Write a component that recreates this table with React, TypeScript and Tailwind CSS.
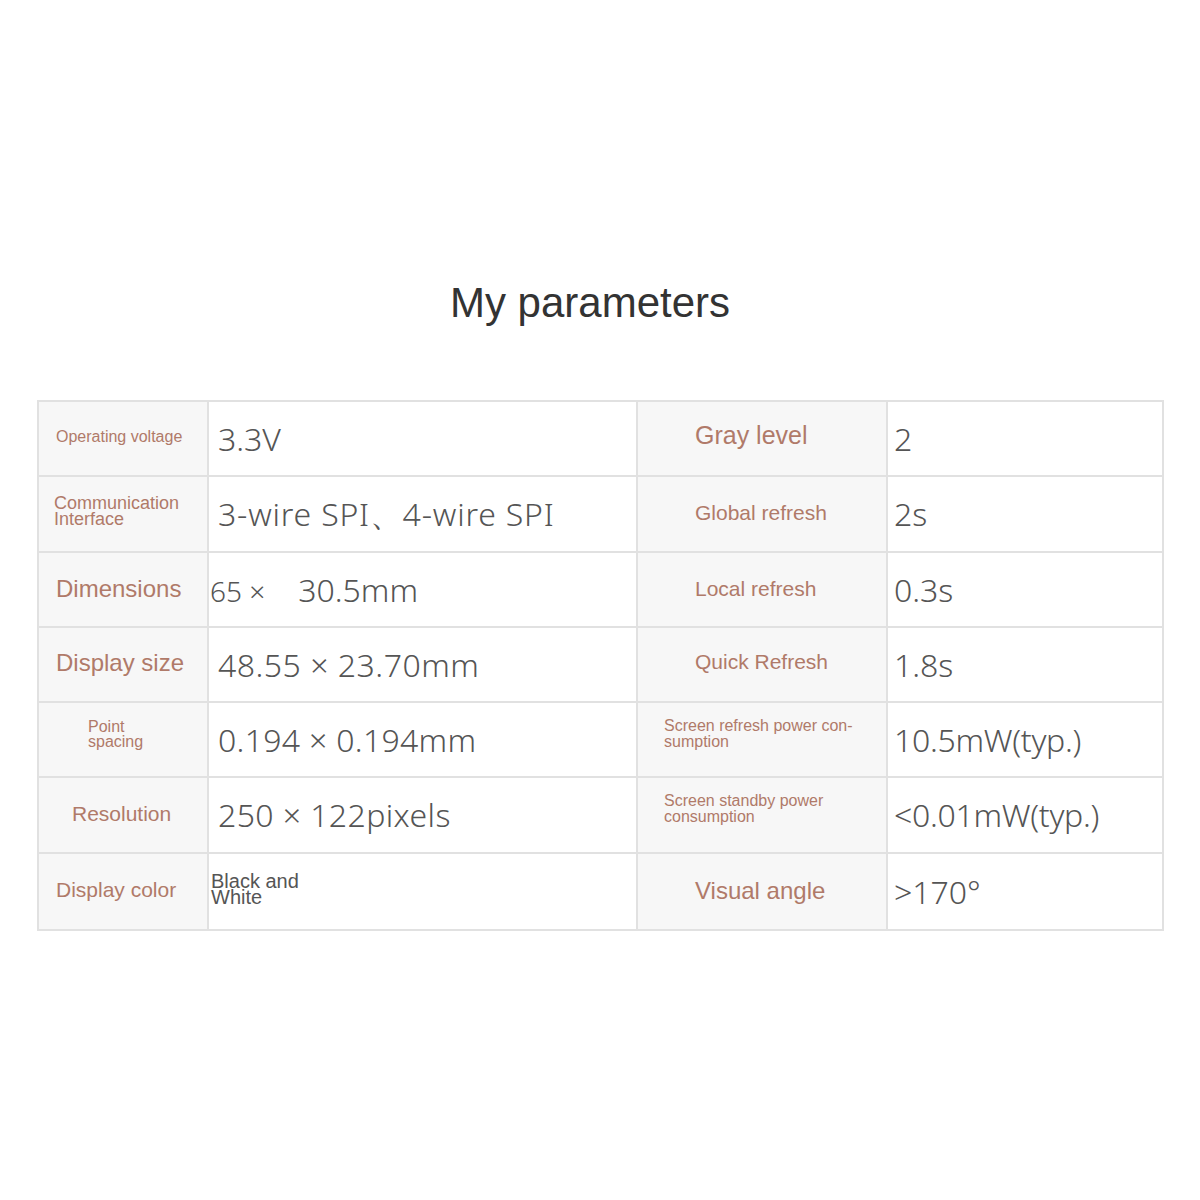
import React from "react";

type Cell = {
  text: React.ReactNode;
  className: string;
};

const label = "text-[#b07a69]";
const value = "text-[#555555]";

const rows: { left: Cell; leftVal: Cell; right: Cell; rightVal: Cell }[] = [
  {
    left: { text: "Operating voltage", className: "text-[16px] pl-[17px] -mt-[4px]" },
    leftVal: { text: "3.3V", className: "text-[32px] pl-[9px]" },
    right: { text: "Gray level", className: "text-[25px] pl-[57px] -mt-[6px]" },
    rightVal: { text: "2", className: "text-[32px] pl-[6px]" },
  },
  {
    left: {
      text: (
        <>
          Communication
          <br />
          Interface
        </>
      ),
      className: "text-[18px] leading-[16px] pl-[15px] -mt-[6px]",
    },
    leftVal: { text: "3-wire SPI、4-wire SPI", className: "text-[32px] pl-[9px] tracking-[0.8px]" },
    right: { text: "Global refresh", className: "text-[21px] pl-[57px] -mt-[2px]" },
    rightVal: { text: "2s", className: "text-[32px] pl-[6px]" },
  },
  {
    left: { text: "Dimensions", className: "text-[24px] pl-[17px] -mt-[2px]" },
    leftVal: {
      text: (
        <>
          <span className="text-[28px]">65 ×</span>
          <span className="ml-[33px]">30.5mm</span>
        </>
      ),
      className: "text-[32px] pl-[1px]",
    },
    right: { text: "Local refresh", className: "text-[21px] pl-[57px] -mt-[2px]" },
    rightVal: { text: "0.3s", className: "text-[32px] pl-[6px]" },
  },
  {
    left: { text: "Display size", className: "text-[24px] pl-[17px] -mt-[4px]" },
    leftVal: { text: "48.55 × 23.70mm", className: "text-[32px] pl-[9px] tracking-[0.5px]" },
    right: { text: "Quick Refresh", className: "text-[21px] pl-[57px] -mt-[6px]" },
    rightVal: { text: "1.8s", className: "text-[32px] pl-[6px]" },
  },
  {
    left: {
      text: (
        <>
          Point
          <br />
          spacing
        </>
      ),
      className: "text-[16px] leading-[15px] pl-[49px] -mt-[12px]",
    },
    leftVal: { text: "0.194 × 0.194mm", className: "text-[32px] pl-[9px] tracking-[0.3px]" },
    right: {
      text: (
        <>
          Screen refresh power con-
          <br />
          sumption
        </>
      ),
      className: "text-[16px] leading-[16px] pl-[26px] -mt-[12px]",
    },
    rightVal: { text: "10.5mW(typ.)", className: "text-[32px] pl-[6px] tracking-[-0.3px]" },
  },
  {
    left: { text: "Resolution", className: "text-[21px] pl-[33px] -mt-[2px]" },
    leftVal: { text: "250 × 122pixels", className: "text-[32px] pl-[9px] tracking-[0.4px]" },
    right: {
      text: (
        <>
          Screen standby power
          <br />
          consumption
        </>
      ),
      className: "text-[16px] leading-[16px] pl-[26px] -mt-[12px]",
    },
    rightVal: { text: "<0.01mW(typ.)", className: "text-[32px] pl-[6px] tracking-[-0.3px]" },
  },
  {
    left: { text: "Display color", className: "text-[21px] pl-[17px] -mt-[4px]" },
    leftVal: {
      text: (
        <>
          Black and
          <br />
          White
        </>
      ),
      className: "text-[20px] leading-[16px] pl-[2px] -mt-[6px] font-['Liberation_Sans',Arial,sans-serif]",
    },
    right: { text: "Visual angle", className: "text-[24px] pl-[57px] -mt-[2px]" },
    rightVal: { text: ">170°", className: "text-[32px] pl-[6px]" },
  },
];

const heights = ["h-[75px]", "h-[76px]", "h-[75px]", "h-[75px]", "h-[75px]", "h-[76px]", "h-[75px]"];

export default function App() {
  return (
    <div className="min-h-[1200px] w-[1200px] bg-white pt-[279px] font-['Liberation_Sans',Arial,sans-serif]">
      <h1 className="text-center text-[42px] leading-[48px] text-[#333333] pr-[20px]">My parameters</h1>

      <div className="mt-[73px] ml-[37px] w-[1127px] border-2 border-[#e1e1e1]">
        {rows.map((row, i) => (
          <div
            key={i}
            className={`grid grid-cols-[170px_429px_250px_274px] ${heights[i]} ${
              i < rows.length - 1 ? "border-b-2 border-[#e1e1e1]" : ""
            }`}
          >
            <div className={`flex items-center bg-[#f7f7f7] border-r-2 border-[#e1e1e1] ${label}`}>
              <div className={row.left.className}>{row.left.text}</div>
            </div>
            <div className={`flex items-center bg-white border-r-2 border-[#e1e1e1] ${value} font-['Noto_Sans',sans-serif] font-light`}>
              <div className={row.leftVal.className}>{row.leftVal.text}</div>
            </div>
            <div className={`flex items-center bg-[#f7f7f7] border-r-2 border-[#e1e1e1] ${label}`}>
              <div className={row.right.className}>{row.right.text}</div>
            </div>
            <div className={`flex items-center bg-white ${value} font-['Noto_Sans',sans-serif] font-light`}>
              <div className={row.rightVal.className}>{row.rightVal.text}</div>
            </div>
          </div>
        ))}
      </div>
    </div>
  );
}
